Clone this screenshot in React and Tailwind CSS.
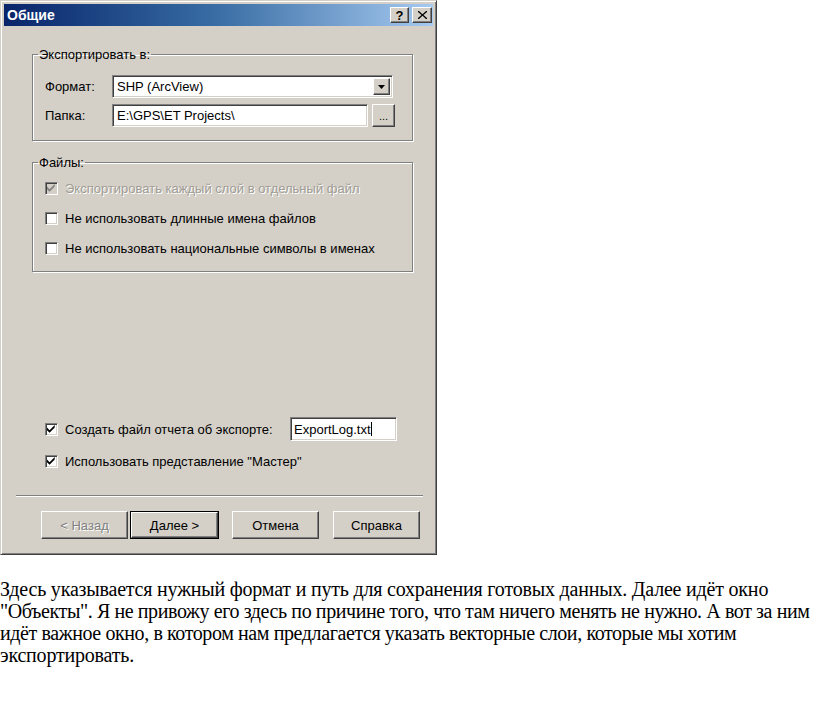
import React from "react";

const raised =
  "bg-[#d4d0c8] border border-t-white border-l-white border-r-[#404040] border-b-[#404040] shadow-[inset_-1px_-1px_0_#808080]";
const sunken =
  "bg-white border border-t-[#808080] border-l-[#808080] border-r-white border-b-white shadow-[inset_1px_1px_0_#404040,inset_-1px_-1px_0_#d4d0c8]";

function Check({ checked, disabled }) {
  return (
    <div
      className={`w-[13px] h-[13px] shrink-0 flex items-center justify-center border border-t-[#808080] border-l-[#808080] border-r-white border-b-white shadow-[inset_1px_1px_0_#404040,inset_-1px_-1px_0_#d4d0c8] ${
        disabled ? "bg-[#d4d0c8]" : "bg-white"
      }`}
    >
      {checked && (
        <svg width="9" height="9" viewBox="0 0 7 7">
          <path
            d="M0 2 L2 4 L6 0 L6 2 L2 6 L0 4 Z"
            fill={disabled ? "#808080" : "#000"}
          />
        </svg>
      )}
    </div>
  );
}

function Row({ checked, disabled, children }) {
  return (
    <div className="flex items-center h-[16px] gap-[7px]">
      <Check checked={checked} disabled={disabled} />
      <span
        className={
          disabled
            ? "text-[#a09c94] [text-shadow:1px_1px_0_#fff]"
            : "text-black"
        }
      >
        {children}
      </span>
    </div>
  );
}

function Button({ children, disabled, def }) {
  const inner = (
    <div
      className={`${raised} w-full h-full flex items-center justify-center ${
        disabled ? "text-[#808080] [text-shadow:1px_1px_0_#fff]" : "text-black"
      }`}
    >
      {children}
    </div>
  );
  if (def) {
    return (
      <div className="w-[89px] h-[28px] border border-black">{inner}</div>
    );
  }
  return <div className="w-[87px] h-[28px]">{inner}</div>;
}

export default function App() {
  return (
    <div
      className="bg-white min-h-[709px] text-[13px] leading-[15px]"
      style={{ fontFamily: '"Liberation Sans", Arial, sans-serif' }}
    >
      <div className="w-[437px] h-[555px] bg-[#d4d0c8] border border-[#d4d0c8] border-r-[#404040] border-b-[#404040] shadow-[inset_1px_1px_0_#fff,inset_-1px_-1px_0_#808080] p-[3px] flex flex-col">
        {/* Title bar */}
        <div className="h-[22px] shrink-0 bg-gradient-to-r from-[#0a246a] via-[#3a6ea5] to-[#a6caf0] flex items-center justify-between pl-[3px] pr-[1px]">
          <span className="text-white font-bold text-[14px]">Общие</span>
          <div className="flex gap-[3px]">
            <div
              className={`${raised} w-[19px] h-[16px] flex items-center justify-center text-black font-bold text-[13px] leading-none`}
            >
              ?
            </div>
            <div
              className={`${raised} w-[20px] h-[16px] flex items-center justify-center`}
            >
              <svg width="9" height="8" viewBox="0 0 9 8">
                <path
                  d="M1 0 L4.5 3.2 L8 0 L9 0 L9 1 L5.5 4 L9 7 L9 8 L8 8 L4.5 4.8 L1 8 L0 8 L0 7 L3.5 4 L0 1 L0 0 Z"
                  fill="#000"
                />
              </svg>
            </div>
          </div>
        </div>

        {/* Body */}
        <div className="flex flex-col">
          <fieldset className="mt-[21px] ml-[28px] w-[381px] border border-[#808080] shadow-[inset_1px_1px_0_#fff,1px_1px_0_#fff] pl-[12px] pt-[13px] pb-[13px]">
            <legend className="ml-[-7px] px-[1px] leading-[15px]">
              Экспортировать в:
            </legend>
            <div className="flex flex-col gap-[6px]">
              <div className="flex items-center">
                <span className="w-[67px] shrink-0">Формат:</span>
                <div
                  className={`${sunken} w-[281px] h-[23px] flex items-center justify-between pl-[4px] pr-[2px]`}
                >
                  <span>SHP (ArcView)</span>
                  <div
                    className={`${raised} w-[17px] h-[17px] flex items-center justify-center`}
                  >
                    <svg width="7" height="4" viewBox="0 0 7 4">
                      <path d="M0 0 L7 0 L3.5 4 Z" fill="#000" />
                    </svg>
                  </div>
                </div>
              </div>
              <div className="flex items-center">
                <span className="w-[67px] shrink-0">Папка:</span>
                <div
                  className={`${sunken} w-[256px] h-[23px] flex items-center pl-[4px]`}
                >
                  <span>E:\GPS\ET Projects\</span>
                </div>
                <div
                  className={`${raised} ml-[4px] w-[23px] h-[23px] flex items-end justify-center pb-[4px] text-[11px] leading-none`}
                >
                  ...
                </div>
              </div>
            </div>
          </fieldset>

          <fieldset className="mt-[14px] ml-[28px] w-[381px] border border-[#808080] shadow-[inset_1px_1px_0_#fff,1px_1px_0_#fff] pl-[12px] pt-[10px] pb-[15px]">
            <legend className="ml-[-7px] px-[1px] leading-[15px]">Файлы:</legend>
            <div className="flex flex-col gap-[14px]">
              <Row checked disabled>
                Экспортировать каждый слой в отдельный файл
              </Row>
              <Row>Не использовать длинные имена файлов</Row>
              <Row>Не использовать национальные символы в именах</Row>
            </div>
          </fieldset>

          <div className="mt-[145px] ml-[41px] flex items-center h-[24px]">
            <Row checked>Создать файл отчета об экспорте:</Row>
            <div
              className={`${sunken} ml-auto mr-[36px] w-[107px] h-[24px] flex items-center pl-[3px]`}
            >
              <span>ExportLog.txt</span>
              <span className="w-[1px] h-[14px] bg-black" />
            </div>
          </div>
          <div className="mt-[12px] ml-[41px]">
            <Row checked>Использовать представление "Мастер"</Row>
          </div>

          <div className="mt-[26px] ml-[12px] w-[407px] h-[2px] border-t border-t-[#808080] border-b border-b-white" />

          <div className="mt-[14px] ml-[37px] flex items-center">
            <Button disabled>&lt; Назад</Button>
            <div className="ml-[2px]">
              <Button def>Далее &gt;</Button>
            </div>
            <div className="ml-[13px]">
              <Button>Отмена</Button>
            </div>
            <div className="ml-[14px]">
              <Button>Справка</Button>
            </div>
          </div>
        </div>
      </div>

      <p
        className="mt-[23px] text-[20px] leading-[22px] text-black whitespace-nowrap"
        style={{ fontFamily: '"Liberation Serif", "Times New Roman", serif' }}
      >
        <span className="block tracking-[-0.2px]">
          Здесь указывается нужный формат и путь для сохранения готовых данных.
          Далее идёт окно
        </span>
        <span className="block tracking-[-0.4px]">
          "Объекты". Я не привожу его здесь по причине того, что там ничего
          менять не нужно. А вот за ним
        </span>
        <span className="block tracking-[-0.4px]">
          идёт важное окно, в котором нам предлагается указать векторные слои,
          которые мы хотим
        </span>
        <span className="block tracking-[-0.2px]">экспортировать.</span>
      </p>
    </div>
  );
}
